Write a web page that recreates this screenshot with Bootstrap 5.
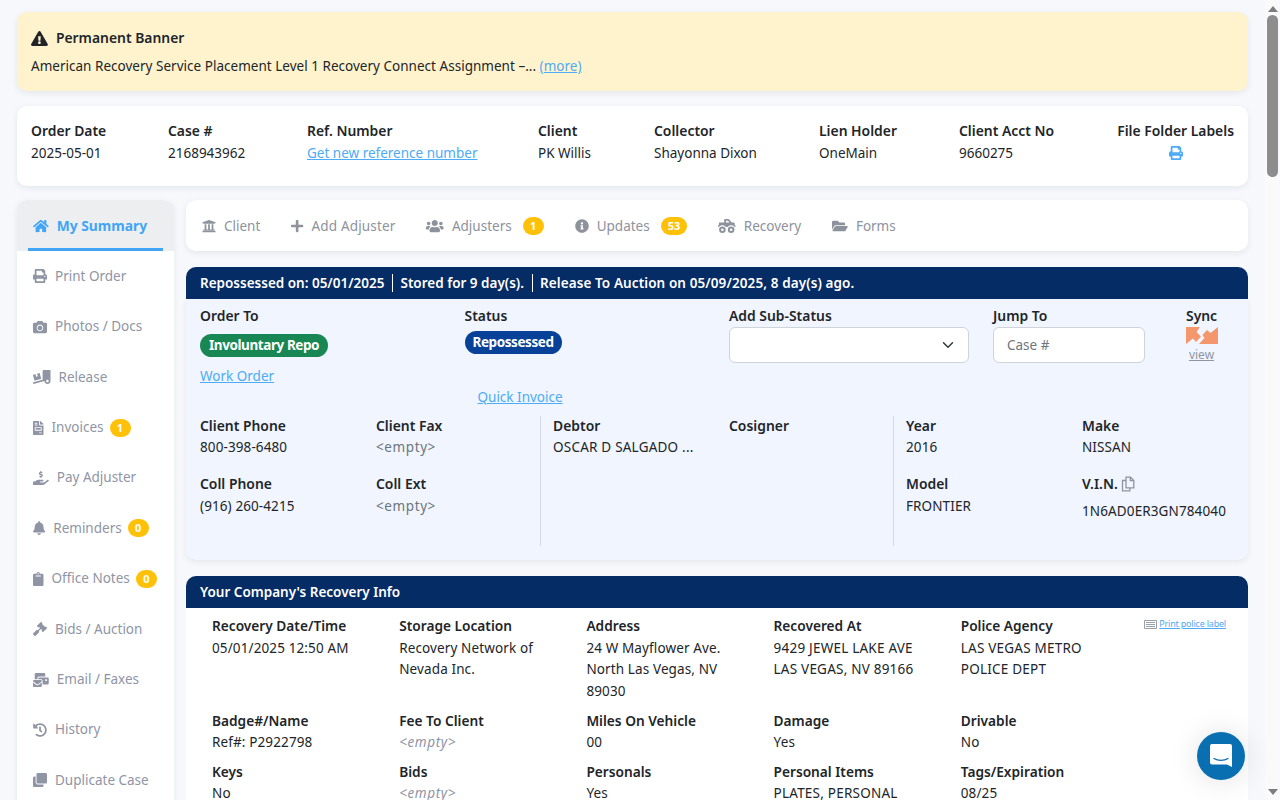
<!DOCTYPE html>
<html lang="en">
<head>
    <meta charset="UTF-8">
    <meta name="viewport" content="width=device-width, initial-scale=1.0">
    <title>Case Summary</title>
    <link href="https://cdn.jsdelivr.net/npm/bootstrap@5.3.0/dist/css/bootstrap.min.css" rel="stylesheet">
    <style>
        body {
            background: #f6f8fb;
            color: #212529;
            font-family: "Noto Sans", "Liberation Sans", sans-serif;
            font-size: 13.5px;
            line-height: 21px;
            height: 800px;
            overflow: hidden;
        }

        a { color: #4dabf7; }
        b, .lbl { display: block; font-weight: 600; font-size: 13.9px; line-height: 19px; margin-bottom: 2px; }
        .ic { height: 14px; width: auto; fill: currentColor; flex: none; }

        /* Page shell and fake scrollbar */
        .page-shell { height: 800px; }
        .page-main { width: 1265px; padding: 12px 17px 0; overflow: hidden; }
        .fake-bar { width: 15px; background: #fafafa; }
        .fake-bar .thumb { width: 11px; height: 162px; background: #8d8d8d; border-radius: 6px; margin-top: 3px; }
        .arrow-up, .arrow-down { width: 0; height: 0; border-left: 5px solid transparent; border-right: 5px solid transparent; }
        .arrow-up { border-bottom: 6px solid #7d7d7d; margin-top: 6px; }
        .arrow-down { border-top: 6px solid #7d7d7d; margin-top: auto; margin-bottom: 5px; }

        /* Cards */
        .box { border-radius: 10px; box-shadow: 0 2px 6px rgba(30, 40, 70, .08); }
        .banner { background: #fff3cd; padding: 16px 14px 14px; height: 79px; margin-bottom: 15px; }
        .banner .ic { height: 15px; }
        .banner-text { margin-top: 7px; letter-spacing: .02px; }
        .order-box { background: #fff; height: 80px; padding: 15px 14px; margin-bottom: 14px; }
        .order-grid { display: grid; grid-template-columns: 137px 139px 231px 116px 165px 140px 1fr; }
        .order-grid .val { margin-top: 3px; }
        .label-col { text-align: center; }
        .label-col a { display: block; }
        .label-col .ic { height: 14px; }

        /* Side menu */
        .side-menu { width: 157px; background: #fff; border-radius: 10px 10px 0 0; flex: none; overflow: hidden; box-shadow: 0 2px 6px rgba(30, 40, 70, .08); }
        .side-item { height: 50.4px; }
        .side-item.on { background: #eceef0; height: 51.2px; }
        .side-link { height: 100%; margin: 0 11px; padding-left: 5px; gap: 8px; color: #8f95a5; text-decoration: none; white-space: nowrap; }
        .side-item.on .side-link { color: #42a5f5; font-weight: 700; font-size: 13.8px; border-bottom: 3px solid #42a5f5; padding-top: 3px; }
        .count { background: #ffc107; color: #fff; font-size: 11px; font-weight: 700; line-height: 18px; height: 18px; min-width: 21px; padding: 0 7px; border-radius: 9px; text-align: center; margin-left: -2px; }

        /* Main column */
        .main-col { width: 1062px; margin-left: 12px; flex: none; }
        .tab-box { background: #fff; height: 51px; padding: 1px 0 0 16px; gap: 31px; margin-bottom: 16px; }
        .tab-link { gap: 8px; color: #8d929c; text-decoration: none; white-space: nowrap; }
        .tab-link .count { margin-left: 3px; }
        .tab-wide { letter-spacing: .15px; }
        .dark-head { background: #052c65; color: #fff; height: 32px; padding: 0 14px; border-radius: 10px 10px 0 0; font-weight: 600; }
        .dark-head .sep { border-left: 1px solid #fff; height: 18px; margin: 0 7px 0 8px; }
        .head-last { letter-spacing: .1px; }
        .repo-panel { background: #f0f5ff; height: 261px; padding: 6.5px 14px 0; border-radius: 0 0 10px 10px; margin-bottom: 16px; box-shadow: 0 2px 6px rgba(30, 40, 70, .08); }
        .repo-top { display: grid; grid-template-columns: 264.5px 264.5px 264px 193px 1fr; height: 110px; }
        .pill-tag { display: inline-block; color: #fff; font-weight: 700; height: 23px; line-height: 23px; border-radius: 12px; padding: 0 9px; font-size: 13.5px; letter-spacing: -.42px; }
        .pill-green { background: #198754; margin-top: 7.5px; }
        .pill-blue { background: #084298; margin-top: 4.5px; padding: 0 8px; }
        .work-link { display: block; margin-top: 9px; }
        .quick-link { display: block; margin: 32.5px 0 0 13px; }
        .field-box { height: 36px; border-radius: 6px; border: 1px solid #ced4da; font-size: 13.5px; }
        .select-box { width: 240px; }
        .jump-box { width: 152px; padding-left: 13px; }
        .jump-box::placeholder { color: #6c757d; }
        .sync-col { width: 32px; }
        .sync-col .lbl { margin-bottom: 0; }
        .sync-col svg { display: block; width: 32px; height: 17px; margin-top: 2px; }
        .view-link { display: block; color: #8f95a5; font-size: 12px; line-height: 18px; text-align: center; margin: 2px 0 0 -1px; }
        .repo-low { display: grid; grid-template-columns: 341px 353px 1fr; height: 130px; letter-spacing: .1px; }
        .repo-low .lbl { letter-spacing: 0; }
        .repo-sec { display: grid; grid-template-columns: 176px 1fr; grid-auto-rows: min-content; row-gap: 16px; }
        .repo-sec.mid { padding-left: 12px; border-right: 1px solid #d5d9e2; }
        .repo-sec.first { border-right: 1px solid #d5d9e2; }
        .repo-sec.last { padding-left: 12px; }
        .muted-val { color: #6c757d; letter-spacing: .6px; }
        .row-low { margin-top: 3px; }
        .vin-val { margin-top: 8px; letter-spacing: .12px; }
        .copy-ic { height: 16px; color: #8f959d; margin-left: -1px; vertical-align: -3px; }

        /* Recovery info */
        .info-body { background: #fff; padding: 7.5px 0 0 26px; position: relative; height: 300px; }
        .info-grid { display: grid; grid-template-columns: repeat(5, 187.2px); line-height: 21.4px; letter-spacing: .12px; }
        .info-grid .lbl { letter-spacing: 0; font-size: 13.7px; margin-bottom: 2.4px; }
        .info-grid > div { padding-bottom: 8.5px; padding-right: 8px; }
        .info-grid > div:nth-child(-n+5) > div + div { margin-top: 3.4px; }
        .caps-val { letter-spacing: .22px; }
        .empty-val { color: #8f95a5; font-style: italic; letter-spacing: .6px; }
        .police-link { position: absolute; right: 22px; top: 9px; font-size: 9px; letter-spacing: -.2px; line-height: 14px; gap: 2px; }
        .police-link svg { width: 13px; height: 9px; }

        /* Chat bubble */
        .chat-btn { position: fixed; left: 1197px; top: 732px; width: 48px; height: 48px; border-radius: 50%; background: #0a6fb0; box-shadow: 0 1px 30px rgba(0, 0, 0, .12); }
    </style>
</head>
<body>
    <svg class="d-none">
        <defs>
            <path id="i-warn" d="M569.517 440.013C587.975 472.007 564.806 512 527.94 512H48.054c-36.937 0-59.999-40.055-41.577-71.987L246.423 23.985c18.467-32.009 64.72-31.951 83.154 0l239.94 416.028zM288 354c-25.405 0-46 20.595-46 46s20.595 46 46 46 46-20.595 46-46-20.595-46-46-46zm-43.673-165.346l7.418 136c.347 6.364 5.609 11.346 11.982 11.346h48.546c6.373 0 11.635-4.982 11.982-11.346l7.418-136c.375-6.874-5.098-12.654-11.982-12.654h-63.383c-6.884 0-12.356 5.78-11.981 12.654z"/>
            <path id="i-print" d="M448 192V77.25c0-8.49-3.37-16.62-9.37-22.63L393.37 9.37c-6-6-14.14-9.37-22.63-9.37H96C78.33 0 64 14.33 64 32v160c-35.35 0-64 28.65-64 64v112c0 8.84 7.16 16 16 16h48v96c0 17.67 14.33 32 32 32h320c17.67 0 32-14.33 32-32v-96h48c8.84 0 16-7.16 16-16V256c0-35.35-28.65-64-64-64zm-64 256H128v-96h256v96zm0-224H128V64h192v48c0 8.84 7.16 16 16 16h48v96zm48 72c-13.25 0-24-10.75-24-24 0-13.26 10.75-24 24-24s24 10.74 24 24c0 13.25-10.75 24-24 24z"/>
            <path id="i-home" d="M280.37 148.26L96 300.11V464a16 16 0 0 0 16 16l112.06-.29a16 16 0 0 0 15.92-16V368a16 16 0 0 1 16-16h64a16 16 0 0 1 16 16v95.64a16 16 0 0 0 16 16.05L464 480a16 16 0 0 0 16-16V300L295.67 148.26a12.19 12.19 0 0 0-15.3 0zM571.6 251.47L488 182.56V44.05a12 12 0 0 0-12-12h-56a12 12 0 0 0-12 12v72.61L318.47 43a48 48 0 0 0-61 0L4.34 251.47a12 12 0 0 0-1.6 16.9l25.5 31A12 12 0 0 0 45.15 301l235.22-193.74a12.19 12.19 0 0 1 15.3 0L530.9 301a12 12 0 0 0 16.9-1.6l25.5-31a12 12 0 0 0-1.7-16.93z"/>
            <path id="i-camera" d="M512 144v288c0 26.5-21.5 48-48 48H48c-26.5 0-48-21.5-48-48V144c0-26.5 21.5-48 48-48h88l12.3-32.9c7-18.7 24.9-31.1 44.9-31.1h125.5c20 0 37.9 12.4 44.9 31.1L376 96h88c26.5 0 48 21.5 48 48zM376 288c0-66.2-53.8-120-120-120s-120 53.8-120 120 53.8 120 120 120 120-53.8 120-120zm-32 0c0 48.5-39.5 88-88 88s-88-39.5-88-88 39.5-88 88-88 88 39.5 88 88z"/>
            <path id="i-truck" d="M50.2 375.6c2.3 8.5 11.1 13.6 19.6 11.3l216.4-58c8.5-2.3 13.6-11.1 11.3-19.6l-49.7-185.5c-2.3-8.5-11.1-13.6-19.6-11.3L151 133.3l24.8 92.7-61.8 16.5-24.8-92.7-77.3 20.7C3.4 172.8-1.7 181.6.6 190.1l49.6 185.5zM384 0c-17.7 0-32 14.3-32 32v323.6L5.9 450c-4.3 1.2-6.8 5.6-5.6 9.8l12.6 46.3c1.2 4.3 5.6 6.8 9.8 5.6l393.7-107.4C418.8 464.1 467.6 512 528 512c61.9 0 112-50.1 112-112V0H384zm144 448c-26.5 0-48-21.5-48-48s21.5-48 48-48 48 21.5 48 48-21.5 48-48 48z"/>
            <path id="i-invoice" d="M288 256H96v64h192v-64zm89-151L279.1 7c-4.5-4.5-10.6-7-17-7H256v128h128v-6.1c0-6.3-2.5-12.4-7-16.9zm-153 31V0H24C10.7 0 0 10.7 0 24v464c0 13.3 10.7 24 24 24h336c13.3 0 24-10.7 24-24V160H248c-13.2 0-24-10.8-24-24zM64 72c0-4.42 3.58-8 8-8h80c4.42 0 8 3.58 8 8v16c0 4.42-3.58 8-8 8H72c-4.42 0-8-3.58-8-8V72zm0 64c0-4.42 3.58-8 8-8h80c4.42 0 8 3.58 8 8v16c0 4.42-3.58 8-8 8H72c-4.42 0-8-3.58-8-8v-16zm256 304c0 4.42-3.58 8-8 8h-80c-4.42 0-8-3.58-8-8v-16c0-4.42 3.58-8 8-8h80c4.42 0 8 3.58 8 8v16zm0-200v96c0 8.84-7.16 16-16 16H80c-8.84 0-16-7.16-16-16v-96c0-8.84 7.16-16 16-16h224c8.84 0 16 7.16 16 16z"/>
            <path id="i-hand" d="M257.6 144.3l50 14.3c3.6 1 6.1 4.4 6.1 8.1 0 4.6-3.8 8.4-8.4 8.4h-32.8c-3.6 0-7.1-.8-10.3-2.2-4.8-2.2-10.4-1.7-14.1 2l-17.5 17.5c-5.3 5.3-4.7 14.3 1.5 18.4 9.5 6.3 20.3 10.1 31.8 11.5V240c0 8.8 7.2 16 16 16h16c8.8 0 16-7.2 16-16v-17.6c30.3-3.6 53.3-31 49.3-63-2.9-23-20.7-41.3-42.9-47.7l-50-14.3c-3.6-1-6.1-4.4-6.1-8.1 0-4.6 3.8-8.4 8.4-8.4h32.8c3.6 0 7.1.8 10.3 2.2 4.8 2.2 10.4 1.7 14.1-2l17.5-17.5c5.3-5.3 4.7-14.3-1.5-18.4-9.5-6.3-20.3-10.1-31.8-11.5V16c0-8.8-7.2-16-16-16h-16c-8.8 0-16 7.2-16 16v17.6c-30.3 3.6-53.3 31-49.3 63 2.9 23 20.7 41.3 42.9 47.7zM565.3 328.1c-11.8-10.7-30.2-10-42.6 0L430.3 402c-11.3 9.1-25.4 14-40 14H272c-8.8 0-16-7.2-16-16s7.2-16 16-16h78.3c15.9 0 30.7-10.9 33.3-26.6 3.3-20-12.1-37.4-31.6-37.4H192c-27 0-53.1 9.3-74.1 26.3L71.4 384H16c-8.8 0-16 7.2-16 16v96c0 8.8 7.2 16 16 16h356.7c14.5 0 28.6-4.9 40-14l151.2-121c15.2-12.2 16.4-35.2 1.4-48.9z"/>
            <path id="i-bell" d="M224 512c35.32 0 63.97-28.65 63.97-64H160.03c0 35.35 28.65 64 63.97 64zm215.39-149.71c-19.32-20.76-55.47-51.99-55.47-154.29 0-77.7-54.48-139.9-127.94-155.16V32c0-17.67-14.32-32-31.98-32s-31.98 14.33-31.98 32v20.84C118.56 68.1 64.08 130.3 64.08 208c0 102.3-36.15 133.53-55.47 154.29-6 6.45-8.66 14.16-8.61 21.71.11 16.4 12.98 32 32.1 32h383.8c19.12 0 32-15.6 32.1-32 .05-7.55-2.61-15.27-8.61-21.71z"/>
            <path id="i-clip" d="M384 112v352c0 26.51-21.49 48-48 48H48c-26.51 0-48-21.49-48-48V112c0-26.51 21.49-48 48-48h80c0-35.29 28.71-64 64-64s64 28.71 64 64h80c26.51 0 48 21.49 48 48zM192 40c-13.255 0-24 10.745-24 24s10.745 24 24 24 24-10.745 24-24-10.745-24-24-24m96 114v-20a6 6 0 0 0-6-6H102a6 6 0 0 0-6 6v20a6 6 0 0 0 6 6h180a6 6 0 0 0 6-6z"/>
            <path id="i-gavel" d="M504.971 199.362l-22.627-22.627c-9.373-9.373-24.569-9.373-33.941 0l-5.657 5.657L329.608 69.255l5.657-5.657c9.373-9.373 9.373-24.569 0-33.941L312.638 7.029c-9.373-9.373-24.569-9.373-33.941 0L154.246 131.48c-9.373 9.373-9.373 24.569 0 33.941l22.627 22.627c9.373 9.373 24.569 9.373 33.941 0l5.657-5.657 39.598 39.598-81.04 81.04-5.657-5.657c-12.497-12.497-32.758-12.497-45.255 0L9.373 412.118c-12.497 12.497-12.497 32.758 0 45.255l45.255 45.255c12.497 12.497 32.758 12.497 45.255 0l114.745-114.745c12.497-12.497 12.497-32.758 0-45.255l-5.657-5.657 81.04-81.04 39.598 39.598-5.657 5.657c-9.373 9.373-9.373 24.569 0 33.941l22.627 22.627c9.373 9.373 24.569 9.373 33.941 0l124.451-124.451c9.372-9.372 9.372-24.568 0-33.941z"/>
            <path id="i-mail" d="M160 448c-25.6 0-51.2-22.4-64-32-64-44.8-83.2-60.8-96-70.4V480c0 17.67 14.33 32 32 32h256c17.67 0 32-14.33 32-32V345.6c-12.8 9.6-32 25.6-96 70.4-12.8 9.6-38.4 32-64 32zm128-192H32c-17.67 0-32 14.33-32 32v16c25.6 19.2 22.4 19.2 115.2 86.4 9.6 6.4 28.8 25.6 44.8 25.6s35.2-19.2 44.8-22.4c92.8-67.2 89.6-67.2 115.2-86.4V288c0-17.67-14.33-32-32-32zm256-96H224c-17.67 0-32 14.33-32 32v32h96c33.21 0 60.59 25.42 63.71 57.82l.29-.22V416h192c17.67 0 32-14.33 32-32V192c0-17.67-14.33-32-32-32zm-32 128h-64v-64h64v64zm-352-96c0-35.29 28.71-64 64-64h224V32c0-17.67-14.33-32-32-32H96C78.33 0 64 14.33 64 32v192h96v-32z"/>
            <path id="i-history" d="M504 255.531c.253 136.64-111.18 248.372-247.82 248.468-59.015.042-113.223-20.53-155.822-54.911-11.077-8.94-11.905-25.541-1.839-35.607l11.267-11.267c8.609-8.609 22.353-9.551 31.891-1.984C173.062 425.135 212.781 440 256 440c101.705 0 184-82.311 184-184 0-101.705-82.311-184-184-184-48.814 0-93.149 18.969-126.068 49.932l50.754 50.754c10.08 10.08 2.941 27.314-11.313 27.314H24c-8.837 0-16-7.163-16-16V38.627c0-14.254 17.234-21.393 27.314-11.314l49.372 49.372C129.209 34.136 189.552 8 256 8c136.81 0 247.747 110.78 248 247.531zm-180.912 78.784l9.823-12.63c8.138-10.463 6.253-25.542-4.21-33.679L288 256.349V152c0-13.255-10.745-24-24-24h-16c-13.255 0-24 10.745-24 24v135.651l65.409 50.874c10.463 8.137 25.541 6.253 33.679-4.21z"/>
            <path id="i-clone" d="M464 0c26.51 0 48 21.49 48 48v288c0 26.51-21.49 48-48 48H176c-26.51 0-48-21.49-48-48V48c0-26.51 21.49-48 48-48h288M176 416c-44.112 0-80-35.888-80-80V128H48c-26.51 0-48 21.49-48 48v288c0 26.51 21.49 48 48 48h288c26.51 0 48-21.49 48-48v-48H176z"/>
            <path id="i-bank" d="M496 128v16a8 8 0 0 1-8 8h-24v12c0 6.627-5.373 12-12 12H60c-6.627 0-12-5.373-12-12v-12H24a8 8 0 0 1-8-8v-16a8 8 0 0 1 4.941-7.392l232-88a7.996 7.996 0 0 1 6.118 0l232 88A8 8 0 0 1 496 128zm-24 304H40c-13.255 0-24 10.745-24 24v16a8 8 0 0 0 8 8h464a8 8 0 0 0 8-8v-16c0-13.255-10.745-24-24-24zM96 192v192H60c-6.627 0-12 5.373-12 12v20h416v-20c0-6.627-5.373-12-12-12h-36V192h-64v192h-64V192h-64v192h-64V192H96z"/>
            <path id="i-plus" d="M416 208H272V64c0-17.67-14.33-32-32-32h-32c-17.67 0-32 14.33-32 32v144H32c-17.67 0-32 14.33-32 32v32c0 17.67 14.33 32 32 32h144v144c0 17.67 14.33 32 32 32h32c17.67 0 32-14.33 32-32V304h144c17.67 0 32-14.33 32-32v-32c0-17.67-14.33-32-32-32z"/>
            <path id="i-users" d="M96 224c35.3 0 64-28.7 64-64s-28.7-64-64-64-64 28.7-64 64 28.7 64 64 64zm448 0c35.3 0 64-28.7 64-64s-28.7-64-64-64-64 28.7-64 64 28.7 64 64 64zm32 32h-64c-17.6 0-33.5 7.1-45.1 18.6 40.3 22.1 68.9 62 75.1 109.4h66c17.7 0 32-14.3 32-32v-32c0-35.3-28.7-64-64-64zm-256 0c61.9 0 112-50.1 112-112S381.9 32 320 32 208 82.1 208 144s50.1 112 112 112zm76.8 32h-8.3c-20.8 10-43.9 16-68.5 16s-47.6-6-68.5-16h-8.3C179.6 288 128 339.6 128 403.2V432c0 26.5 21.5 48 48 48h288c26.5 0 48-21.5 48-48v-28.8c0-63.6-51.6-115.2-115.2-115.2zm-223.7-13.4C161.5 263.1 145.6 256 128 256H64c-35.3 0-64 28.7-64 64v32c0 17.7 14.3 32 32 32h65.9c6.3-47.4 34.9-87.3 75.2-109.4z"/>
            <path id="i-info" d="M256 8C119.043 8 8 119.083 8 256c0 136.997 111.043 248 248 248s248-111.003 248-248C504 119.083 392.957 8 256 8zm0 110c23.196 0 42 18.804 42 42s-18.804 42-42 42-42-18.804-42-42 18.804-42 42-42zm56 254c0 6.627-5.373 12-12 12h-88c-6.627 0-12-5.373-12-12v-24c0-6.627 5.373-12 12-12h12v-64h-12c-6.627 0-12-5.373-12-12v-24c0-6.627 5.373-12 12-12h64c6.627 0 12 5.373 12 12v100h12c6.627 0 12 5.373 12 12v24z"/>
            <path id="i-monster" d="M624 224h-16v-64c0-17.67-14.33-32-32-32h-73.6L419.22 24.02A64.025 64.025 0 0 0 369.24 0H256c-17.67 0-32 14.33-32 32v96H48c-8.84 0-16 7.16-16 16v80H16c-8.84 0-16 7.16-16 16v32c0 8.84 7.16 16 16 16h16.72c29.21-38.65 75.1-64 127.28-64s98.07 25.35 127.28 64h65.45c29.21-38.65 75.1-64 127.28-64s98.07 25.35 127.28 64H624c8.84 0 16-7.16 16-16v-32c0-8.84-7.16-16-16-16zm-336-96V64h81.24l51.2 64H288zM160 272a120 120 0 1 0 0 240 120 120 0 1 0 0-240zm0 72a48 48 0 1 1 0 96 48 48 0 1 1 0-96zM480 272a120 120 0 1 0 0 240 120 120 0 1 0 0-240zm0 72a48 48 0 1 1 0 96 48 48 0 1 1 0-96z"/>
            <path id="i-folder" d="M572.694 292.093L500.27 416.248A63.997 63.997 0 0 1 444.989 448H45.025c-18.523 0-30.064-20.093-20.731-36.093l72.424-124.155A64 64 0 0 1 152 256h399.964c18.523 0 30.064 20.093 20.73 36.093zM152 224h328v-48c0-26.51-21.49-48-48-48H272l-64-64H48C21.49 64 0 85.49 0 112v278.046l69.077-118.418C86.214 242.25 117.989 224 152 224z"/>
        </defs>
    </svg>

    <div class="page-shell d-flex">
        <div class="page-main">
            <!-- Banner -->
            <div class="banner box">
                <div class="d-flex align-items-center gap-2"><svg class="ic" viewBox="0 0 576 512"><use href="#i-warn"/></svg><b>Permanent Banner</b></div>
                <div class="banner-text">American Recovery Service Placement Level 1 Recovery Connect Assignment –... <a href="#">(more)</a></div>
            </div>

            <!-- Order info -->
            <div class="order-box box order-grid">
                <div><div class="lbl">Order Date</div><div class="val">2025-05-01</div></div>
                <div><div class="lbl">Case #</div><div class="val">2168943962</div></div>
                <div><div class="lbl">Ref. Number</div><div class="val"><a href="#">Get new reference number</a></div></div>
                <div><div class="lbl">Client</div><div class="val">PK Willis</div></div>
                <div><div class="lbl">Collector</div><div class="val">Shayonna Dixon</div></div>
                <div><div class="lbl">Lien Holder</div><div class="val">OneMain</div></div>
                <div class="d-flex justify-content-between">
                    <div><div class="lbl">Client Acct No</div><div class="val">9660275</div></div>
                    <div class="label-col"><div class="lbl">File Folder Labels</div><a href="#"><svg class="ic" viewBox="0 0 512 512"><use href="#i-print"/></svg></a></div>
                </div>
            </div>

            <div class="d-flex">
                <!-- Side menu -->
                <div class="side-menu">
                    <div class="side-item on"><a class="side-link d-flex align-items-center" href="#"><svg class="ic" viewBox="0 0 576 512"><use href="#i-home"/></svg>My Summary</a></div>
                    <div class="side-item"><a class="side-link d-flex align-items-center" href="#"><svg class="ic" viewBox="0 0 512 512"><use href="#i-print"/></svg>Print Order</a></div>
                    <div class="side-item"><a class="side-link d-flex align-items-center" href="#"><svg class="ic" viewBox="0 0 512 512"><use href="#i-camera"/></svg>Photos / Docs</a></div>
                    <div class="side-item"><a class="side-link d-flex align-items-center" href="#"><svg class="ic" viewBox="0 0 640 512"><use href="#i-truck"/></svg>Release</a></div>
                    <div class="side-item"><a class="side-link d-flex align-items-center" href="#"><svg class="ic" viewBox="0 0 384 512"><use href="#i-invoice"/></svg>Invoices<span class="count">1</span></a></div>
                    <div class="side-item"><a class="side-link d-flex align-items-center" href="#"><svg class="ic" viewBox="0 0 576 512"><use href="#i-hand"/></svg>Pay Adjuster</a></div>
                    <div class="side-item"><a class="side-link d-flex align-items-center" href="#"><svg class="ic" viewBox="0 0 448 512"><use href="#i-bell"/></svg>Reminders<span class="count">0</span></a></div>
                    <div class="side-item"><a class="side-link d-flex align-items-center" href="#"><svg class="ic" viewBox="0 0 384 512"><use href="#i-clip"/></svg>Office Notes<span class="count">0</span></a></div>
                    <div class="side-item"><a class="side-link d-flex align-items-center" href="#"><svg class="ic" viewBox="0 0 512 512"><use href="#i-gavel"/></svg>Bids / Auction</a></div>
                    <div class="side-item"><a class="side-link d-flex align-items-center" href="#"><svg class="ic" viewBox="0 0 576 512"><use href="#i-mail"/></svg>Email / Faxes</a></div>
                    <div class="side-item"><a class="side-link d-flex align-items-center" href="#"><svg class="ic" viewBox="0 0 512 512"><use href="#i-history"/></svg>History</a></div>
                    <div class="side-item"><a class="side-link d-flex align-items-center" href="#"><svg class="ic" viewBox="0 0 512 512"><use href="#i-clone"/></svg>Duplicate Case</a></div>
                </div>

                <div class="main-col">
                    <!-- Tabs -->
                    <div class="tab-box box d-flex align-items-center">
                        <a class="tab-link d-flex align-items-center" href="#"><svg class="ic" viewBox="0 0 512 512"><use href="#i-bank"/></svg>Client</a>
                        <a class="tab-link tab-wide d-flex align-items-center" href="#"><svg class="ic" viewBox="0 0 448 512"><use href="#i-plus"/></svg>Add Adjuster</a>
                        <a class="tab-link d-flex align-items-center" href="#"><svg class="ic" viewBox="0 0 640 512"><use href="#i-users"/></svg>Adjusters<span class="count">1</span></a>
                        <a class="tab-link d-flex align-items-center" href="#"><svg class="ic" viewBox="0 0 512 512"><use href="#i-info"/></svg>Updates<span class="count">53</span></a>
                        <a class="tab-link d-flex align-items-center" href="#"><svg class="ic" viewBox="0 0 640 512"><use href="#i-monster"/></svg>Recovery</a>
                        <a class="tab-link d-flex align-items-center" href="#"><svg class="ic" viewBox="0 0 576 512"><use href="#i-folder"/></svg>Forms</a>
                    </div>

                    <!-- Repossession panel -->
                    <div class="dark-head d-flex align-items-center">Repossessed on: 05/01/2025<span class="sep"></span>Stored for 9 day(s).<span class="sep"></span><span class="head-last">Release To Auction on 05/09/2025, 8 day(s) ago.</span></div>
                    <div class="repo-panel">
                        <div class="repo-top">
                            <div><div class="lbl">Order To</div><span class="pill-tag pill-green">Involuntary Repo</span><a class="work-link" href="#">Work Order</a></div>
                            <div><div class="lbl">Status</div><span class="pill-tag pill-blue">Repossessed</span><a class="quick-link" href="#">Quick Invoice</a></div>
                            <div><div class="lbl">Add Sub-Status</div><select class="form-select field-box select-box"><option></option></select></div>
                            <div><div class="lbl">Jump To</div><input class="form-control field-box jump-box" type="text" placeholder="Case #"></div>
                            <div class="sync-col">
                                <div class="lbl">Sync</div>
                                <svg viewBox="0 0 32 17"><path fill="#f4976c" d="M0 0H14L10.500 5L15 9.500L10 15L7 11.500L0 17ZM32 17H13L18.500 11L16.500 8L21 3L24.500 6L32 0Z"/></svg>
                                <a class="view-link" href="#">view</a>
                            </div>
                        </div>
                        <div class="repo-low">
                            <div class="repo-sec first">
                                <div><div class="lbl">Client Phone</div><div>800-398-6480</div></div>
                                <div><div class="lbl">Client Fax</div><div class="muted-val">&lt;empty&gt;</div></div>
                                <div><div class="lbl">Coll Phone</div><div class="row-low">(916) 260-4215</div></div>
                                <div><div class="lbl">Coll Ext</div><div class="muted-val row-low">&lt;empty&gt;</div></div>
                            </div>
                            <div class="repo-sec mid">
                                <div><div class="lbl">Debtor</div><div class="caps-val">OSCAR D SALGADO ...</div></div>
                                <div><div class="lbl">Cosigner</div></div>
                            </div>
                            <div class="repo-sec last">
                                <div><div class="lbl">Year</div><div>2016</div></div>
                                <div><div class="lbl">Make</div><div>NISSAN</div></div>
                                <div><div class="lbl">Model</div><div class="row-low">FRONTIER</div></div>
                                <div>
                                    <div class="lbl">V.I.N. <svg class="ic copy-ic" viewBox="0 0 16 16"><path fill="none" stroke="currentColor" stroke-width="1.3" d="M6 1.2h4.5l3.3 3.3v7.3H6zM10.300 1.200v3.500h3.500M6 4.500H2.500v10.300h7.300v-3"/></svg></div>
                                    <div class="vin-val">1N6AD0ER3GN784040</div>
                                </div>
                            </div>
                        </div>
                    </div>

                    <!-- Recovery info -->
                    <div class="dark-head d-flex align-items-center">Your Company's Recovery Info</div>
                    <div class="info-body">
                        <a class="police-link d-flex align-items-center" href="#"><svg viewBox="0 0 13 9"><path fill="none" stroke="#9aa0a8" d="M.5.5h12v8H.5zM2 2.500h9M2 4.500h9M2 6.500h9"/></svg>Print police label</a>
                        <div class="info-grid">
                            <div><div class="lbl">Recovery Date/Time</div><div>05/01/2025 12:50 AM</div></div>
                            <div><div class="lbl">Storage Location</div><div>Recovery Network of Nevada Inc.</div></div>
                            <div><div class="lbl">Address</div><div>24 W Mayflower Ave.<br>North Las Vegas, NV<br>89030</div></div>
                            <div><div class="lbl">Recovered At</div><div class="caps-val">9429 JEWEL LAKE AVE<br>LAS VEGAS, NV 89166</div></div>
                            <div><div class="lbl">Police Agency</div><div class="caps-val">LAS VEGAS METRO<br>POLICE DEPT</div></div>

                            <div><div class="lbl">Badge#/Name</div><div>Ref#: P2922798</div></div>
                            <div><div class="lbl">Fee To Client</div><div class="empty-val">&lt;empty&gt;</div></div>
                            <div><div class="lbl">Miles On Vehicle</div><div>00</div></div>
                            <div><div class="lbl">Damage</div><div>Yes</div></div>
                            <div><div class="lbl">Drivable</div><div>No</div></div>

                            <div><div class="lbl">Keys</div><div>No</div></div>
                            <div><div class="lbl">Bids</div><div class="empty-val">&lt;empty&gt;</div></div>
                            <div><div class="lbl">Personals</div><div>Yes</div></div>
                            <div><div class="lbl">Personal Items</div><div class="caps-val">PLATES, PERSONAL</div></div>
                            <div><div class="lbl">Tags/Expiration</div><div>08/25</div></div>
                        </div>
                    </div>
                </div>
            </div>
        </div>

        <!-- Scrollbar -->
        <div class="fake-bar d-flex flex-column align-items-center">
            <div class="arrow-up"></div>
            <div class="thumb"></div>
            <div class="arrow-down"></div>
        </div>
    </div>

    <!-- Chat bubble -->
    <div class="chat-btn d-flex align-items-center justify-content-center">
        <svg width="24" height="26" viewBox="0 0 24 26"><path fill="#fff" d="M3 1h18a2 2 0 0 1 2 2v21l-5-2.500H3a2 2 0 0 1-2-2V3a2 2 0 0 1 2-2z"/><path fill="none" stroke="#0a6fb0" stroke-width="1.4" stroke-linecap="round" d="M5 15.500c4 2.500 10 2.500 14 0"/></svg>
    </div>

    <script src="https://cdn.jsdelivr.net/npm/bootstrap@5.3.0/dist/js/bootstrap.bundle.min.js"></script>
</body>
</html>
